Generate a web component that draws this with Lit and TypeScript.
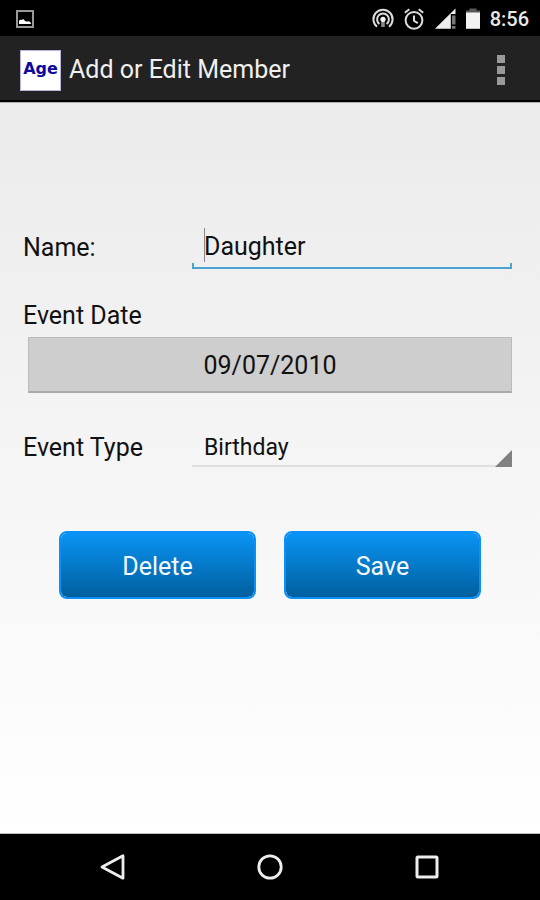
import { LitElement, html, css, svg } from "lit";
import { customElement, state } from "lit/decorators.js";

const pictureIcon = svg`<svg class="picture" width="18" height="18" viewBox="0 0 18 18" aria-hidden="true">
  <rect x="1" y="1" width="16" height="16" fill="none" stroke="#999" stroke-width="2"/>
  <path d="M3 14V10.800C4 9.500 5 9.800 5.800 10C6.500 8.800 8 8.800 8.800 10.800C10 12.200 11 11.200 12.200 11.200C13.500 11.200 15 12 15 14Z" fill="#fff"/>
</svg>`;

const hotspotIcon = svg`<svg width="22" height="22" viewBox="0 0 22 22" aria-hidden="true">
  <g fill="none" stroke="#dcdcdc" stroke-width="2">
    <path d="M5 18.800A9.600 9.600 0 1 1 17 18.800"/>
    <path d="M7.400 16A5.900 5.900 0 1 1 14.600 16"/>
  </g>
  <path d="M9.200 12H12.800V19H9.200Z" fill="#8a8a8a"/>
  <circle cx="11" cy="11.300" r="2.600" fill="#f4f4f4"/>
</svg>`;

const alarmIcon = svg`<svg width="20" height="22" viewBox="0 0 20 22" aria-hidden="true">
  <g fill="none" stroke="#dcdcdc" stroke-width="2">
    <circle cx="10" cy="12.300" r="8.400"/>
    <path d="M.8 4.800L5.300 1.200M19.200 4.800L14.700 1.200"/>
    <path d="M10 7.500V12.800L13.800 15.200"/>
  </g>
</svg>`;

const signalIcon = svg`<svg width="22" height="22" viewBox="0 0 22 22" aria-hidden="true">
  <path d="M1 20.800L21.500 .5V6H16.800V20.800Z" fill="#eee"/>
  <path d="M18 7.500H21.500V16.500H18ZM18 18H21.500V20.800H18Z" fill="#777"/>
</svg>`;

const batteryIcon = svg`<svg width="14" height="22" viewBox="0 0 14 22" aria-hidden="true">
  <path d="M3.500 .5H10.500V2.500H14V5H0V2.500H3.500Z" fill="#5a5a5a"/>
  <path d="M0 4.500H14V20.800H0Z" fill="#f3f3f3"/>
</svg>`;

const backIcon = svg`<svg width="28" height="28" viewBox="0 0 28 28" aria-hidden="true">
  <path d="M24 2.800V25.200L3 14Z" fill="none" stroke="#eee" stroke-width="2.800" stroke-linejoin="round"/>
</svg>`;

const homeIcon = svg`<svg width="28" height="28" viewBox="0 0 28 28" aria-hidden="true">
  <circle cx="14" cy="14" r="11.200" fill="none" stroke="#eee" stroke-width="2.800"/>
</svg>`;

const recentIcon = svg`<svg width="28" height="28" viewBox="0 0 28 28" aria-hidden="true">
  <rect x="4" y="4" width="20" height="20" rx="1" fill="none" stroke="#eee" stroke-width="3"/>
</svg>`;

@customElement("app-root")
export class AppRoot extends LitElement {
  @state() private name = "Daughter";
  @state() private date = "09/07/2010";

  static styles = css`
    :host {
      display: flex;
      flex-direction: column;
      min-height: 100vh;
      background: #000;
      color: #111;
      font-family: Roboto, "Liberation Sans", sans-serif;
      font-size: 25px;
      line-height: 32px;
    }
    * { box-sizing: border-box; }
    svg { display: block; flex: none; }
    button, input, select {
      margin: 0;
      padding: 0;
      border: 0;
      border-radius: 0;
      background: none;
      color: inherit;
      font: inherit;
      outline: none;
    }
    .status {
      display: flex;
      align-items: center;
      gap: 10px;
      height: 36px;
      padding: 2px 11px 0 16px;
      color: #e8e8e8;
      font-size: 20px;
      font-weight: 500;
      line-height: 24px;
    }
    .picture { margin-right: auto; }
    .bar {
      display: flex;
      align-items: center;
      gap: 8px;
      height: 66px;
      padding: 4px 35px 0 20px;
      background: #222;
      border-bottom: 2px solid #000;
    }
    .logo {
      display: grid;
      place-items: center;
      width: 41px;
      height: 41px;
      padding-bottom: 2px;
      background: #fff;
      border: 1px solid #b9b4dc;
      color: #0c0a9c;
      font: bold 16px/20px "DejaVu Sans", sans-serif;
    }
    h1 {
      flex: 1;
      margin: 0;
      color: #f0f0f0;
      font-size: 25px;
      font-weight: 400;
      line-height: 30px;
    }
    .more {
      display: grid;
      gap: 3px;
    }
    .more i {
      width: 8px;
      height: 8px;
      background: #999;
    }
    main {
      flex: 1;
      padding: 124px 28px 40px 23px;
      background: linear-gradient(#ebebeb, #fff);
      border-top: 1px solid #b0b0b0;
      border-bottom: 1px solid #bbb;
    }
    .row {
      display: grid;
      grid-template-columns: 169px 1fr;
      align-items: center;
    }
    .field {
      position: relative;
      display: grid;
      height: 42px;
    }
    .field input {
      width: 100%;
      padding: 0 12px 2px;
    }
    .edge {
      position: absolute;
      inset: auto 0 0;
      height: 6px;
      border: 2px solid #4ba3d3;
      border-top: 0;
      pointer-events: none;
    }
    .caret {
      position: absolute;
      top: 1px;
      left: 12px;
      width: 1px;
      height: 34px;
      background: #888;
    }
    .date-label {
      display: block;
      margin: 31px 0 5px;
    }
    .date {
      display: block;
      width: calc(100% - 5px);
      height: 56px;
      margin: 0 0 36px 5px;
      padding-top: 3px;
      background: #cecece;
      border: 1px solid #bbb;
      border-bottom: 2px solid #aaa;
    }
    .type { height: 38px; }
    .type select {
      appearance: none;
      width: 100%;
      padding: 2px 12px 0;
      border-bottom: 2px solid #e0e0e0;
      font-size: 23px;
    }
    .corner {
      position: absolute;
      right: 0;
      bottom: 0;
      width: 17px;
      height: 17px;
      background: #808080;
      clip-path: polygon(100% 0, 100% 100%, 0 100%);
      pointer-events: none;
    }
    .actions {
      display: grid;
      grid-template-columns: 1fr 1fr;
      gap: 28px;
      padding: 64px 31px 0 36px;
    }
    .actions button {
      height: 68px;
      padding-top: 3px;
      background: linear-gradient(#0a94f4, #005f9e) padding-box;
      border: 2px solid #0a90f8;
      border-radius: 8px;
      color: #f4faff;
    }
    nav {
      display: flex;
      justify-content: center;
      align-items: center;
      gap: 129px;
      height: 66px;
    }
  `;

  render() {
    return html`
      <div class="status">
        ${pictureIcon}${hotspotIcon}${alarmIcon}${signalIcon}${batteryIcon}
        <span>8:56</span>
      </div>
      <header class="bar">
        <span class="logo">Age</span>
        <h1>Add or Edit Member</h1>
        <button class="more" aria-label="More options"><i></i><i></i><i></i></button>
      </header>
      <main>
        <div class="row">
          <label for="name">Name:</label>
          <div class="field">
            <input id="name" type="text" .value=${this.name}
              @input=${(e: Event) => (this.name = (e.target as HTMLInputElement).value)} />
            <span class="edge"></span>
            <span class="caret"></span>
          </div>
        </div>
        <label class="date-label" for="date">Event Date</label>
        <button class="date" id="date">${this.date}</button>
        <div class="row">
          <label for="type">Event Type</label>
          <div class="field type">
            <select id="type">
              <option selected>Birthday</option>
            </select>
            <span class="corner"></span>
          </div>
        </div>
        <div class="actions">
          <button>Delete</button>
          <button>Save</button>
        </div>
      </main>
      <nav>
        <button aria-label="Back">${backIcon}</button>
        <button aria-label="Home">${homeIcon}</button>
        <button aria-label="Recent apps">${recentIcon}</button>
      </nav>
    `;
  }
}
